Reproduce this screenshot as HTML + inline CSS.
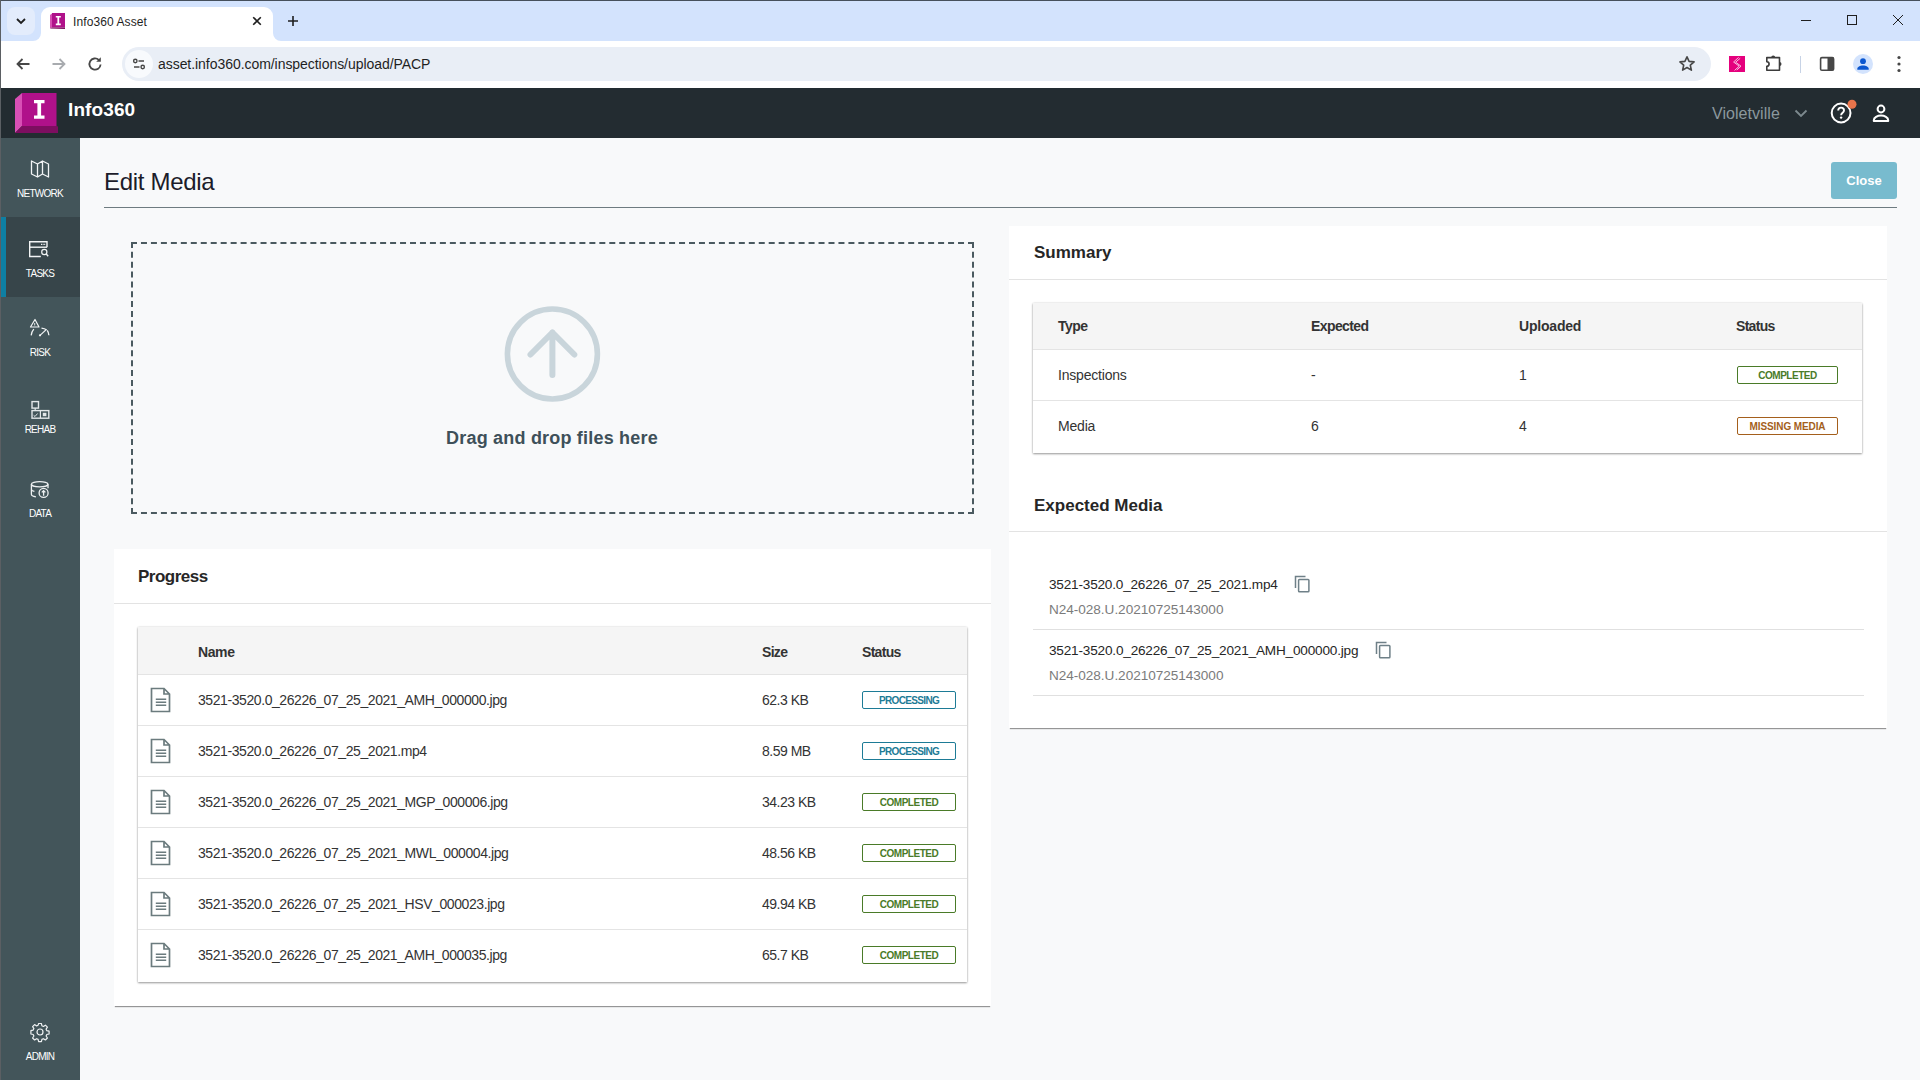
<!DOCTYPE html>
<html><head><meta charset="utf-8">
<style>
*{box-sizing:border-box;margin:0;padding:0}
html,body{width:1920px;height:1080px;overflow:hidden;background:#f8f9fa;font-family:"Liberation Sans",sans-serif;color:#262626}
.a{position:absolute}
svg{display:block}
/* browser chrome */
#tabstrip{left:0;top:0;width:1920px;height:41px;background:#d3e3fd}
#frametop{left:0;top:0;width:1920px;height:1px;background:#46505c}
#frameleft{left:0;top:0;width:1px;height:1080px;background:#5b5f63;z-index:50}
#toolbar{left:0;top:41px;width:1920px;height:47px;background:#fff}
#tab{left:41px;top:7px;width:232px;height:34px;background:#fff;border-radius:9px 9px 0 0}
#omni{left:122px;top:47px;width:1589px;height:34px;background:#e9eef6;border-radius:17px}
/* app header */
#hdr{left:0;top:88px;width:1920px;height:50px;background:#232c31}
#side{left:0;top:138px;width:80px;height:942px;background:#43555a}
.nav{position:absolute;left:0;width:80px;height:80px;color:#fff;font-size:9.5px;text-align:center}
.nav .lbl{position:absolute;left:0;width:80px;text-align:center}
#main{left:80px;top:138px;width:1840px;height:942px;background:#f8f9fa}
.sl{left:0;width:80px;text-align:center;color:#fff;font-size:10px;letter-spacing:-0.75px;white-space:nowrap}
.card{position:absolute;background:#fff}
.ttl{position:absolute;font-weight:bold;color:#262626}
.hline{position:absolute;height:1px;background:#e3e3e3}
.tbl{position:absolute;background:#fff;box-shadow:0 1px 2px rgba(0,0,0,.38),0 0 2px rgba(0,0,0,.12)}
.th{position:absolute;left:0;right:0;top:0;background:#f5f5f5;border-bottom:1px solid #e4e4e4}
.row{position:absolute;left:0;right:0;border-bottom:1px solid #e4e4e4}
.txt{position:absolute;white-space:nowrap;font-size:14px;color:#333}
.hd{position:absolute;white-space:nowrap;font-size:14px;font-weight:bold;color:#333}
.badge{position:absolute;height:18px;border:1.5px solid;border-radius:2px;font-size:10px;font-weight:bold;text-align:center;line-height:17px;white-space:nowrap}
.proc{color:#1d7b96;border-color:#1d7b96}
.comp{color:#4a7b28;border-color:#4a7b28}
.miss{color:#a45f1c;border-color:#a45f1c}
</style></head><body>
<div class="a" id="tabstrip"></div>
<div class="a" id="frametop"></div>
<div class="a" id="frameleft"></div>
<div class="a" id="toolbar"></div>
<div class="a" id="tab"></div>
<div class="a" id="omni"></div>


<!-- chrome details -->
<div class="a" style="left:7px;top:7px;width:28px;height:28px;border-radius:8px;background:#e3ecfc"></div>
<svg class="a" style="left:13px;top:13px" width="16" height="16" viewBox="0 0 16 16"><path d="M4 6l4 4 4-4" fill="none" stroke="#1f1f1f" stroke-width="1.8"/></svg>
<svg class="a" style="left:33px;top:33px" width="8" height="8" viewBox="0 0 8 8"><path d="M0 8A8 8 0 0 0 8 0V8z" fill="#fff"/></svg>
<svg class="a" style="left:273px;top:33px" width="8" height="8" viewBox="0 0 8 8"><path d="M8 8A8 8 0 0 1 0 0V8z" fill="#fff"/></svg>
<svg class="a" style="left:49px;top:12px" width="18" height="18" viewBox="0 0 18 18">
  <polygon points="1,3 3,1.5 3,15.5 1,16.5" fill="#d64fb3"/>
  <rect x="3" y="1" width="13" height="14.5" fill="#b0118a"/>
  <polygon points="1,16.5 3,15.5 16,15.5 16,17" fill="#7a0d5c"/>
  <path d="M6.8 4h5v1.6h-1.6v6h1.6v1.6h-5v-1.6h1.6v-6h-1.6z" fill="#fff"/>
</svg>
<div class="a" style="left:73px;top:15px;font-size:12px;color:#1f1f1f;white-space:nowrap;letter-spacing:0.1px">Info360 Asset</div>
<svg class="a" style="left:249px;top:13px" width="16" height="16" viewBox="0 0 16 16"><path d="M4.2 4.2l7.6 7.6M11.8 4.2l-7.6 7.6" stroke="#1f1f1f" stroke-width="1.6"/></svg>
<svg class="a" style="left:285px;top:13px" width="16" height="16" viewBox="0 0 16 16"><path d="M8 3v10M3 8h10" stroke="#1f1f1f" stroke-width="1.6"/></svg>
<!-- window controls -->
<svg class="a" style="left:1796px;top:10px" width="20" height="20" viewBox="0 0 20 20"><path d="M5 10.5h10" stroke="#1f1f1f" stroke-width="1"/></svg>
<svg class="a" style="left:1842px;top:10px" width="20" height="20" viewBox="0 0 20 20"><rect x="5.5" y="5.5" width="9" height="9" fill="none" stroke="#1f1f1f" stroke-width="1"/></svg>
<svg class="a" style="left:1888px;top:10px" width="20" height="20" viewBox="0 0 20 20"><path d="M5 5l10 10M15 5L5 15" stroke="#1f1f1f" stroke-width="1"/></svg>
<!-- nav -->
<svg class="a" style="left:13px;top:54px" width="20" height="20" viewBox="0 0 20 20"><path d="M16.5 10H4.5M9.5 5l-5 5 5 5" fill="none" stroke="#474747" stroke-width="1.8"/></svg>
<svg class="a" style="left:49px;top:54px" width="20" height="20" viewBox="0 0 20 20"><path d="M3.5 10h12M10.5 5l5 5-5 5" fill="none" stroke="#a8abaf" stroke-width="1.8"/></svg>
<svg class="a" style="left:85px;top:54px" width="20" height="20" viewBox="0 0 20 20"><path d="M15.6 10.5a5.6 5.6 0 1 1-1.8-4.6" fill="none" stroke="#474747" stroke-width="1.8"/><path d="M15.8 3.2v4.6h-4.6z" fill="#474747"/></svg>
<div class="a" style="left:125px;top:50px;width:28px;height:28px;border-radius:14px;background:#f8fafd"></div>
<svg class="a" style="left:131px;top:56px" width="16" height="16" viewBox="0 0 16 16">
  <circle cx="4.3" cy="5" r="1.7" fill="none" stroke="#474747" stroke-width="1.4"/>
  <path d="M7.5 5h5.5M3 11h5.5" stroke="#474747" stroke-width="1.6"/>
  <circle cx="11.7" cy="11" r="1.7" fill="none" stroke="#474747" stroke-width="1.4"/>
</svg>
<div class="a" style="left:158px;top:56px;font-size:14px;color:#1f1f1f;white-space:nowrap;letter-spacing:-0.05px">asset.info360.com/inspections/upload/PACP</div>
<svg class="a" style="left:1677px;top:54px" width="20" height="20" viewBox="0 0 20 20"><path d="M10 2.8l2.1 4.6 5 .5-3.8 3.3 1.1 4.9L10 13.5l-4.4 2.6 1.1-4.9-3.8-3.3 5-.5z" fill="none" stroke="#474747" stroke-width="1.6" stroke-linejoin="round"/></svg>
<div class="a" style="left:1729px;top:56px;width:16px;height:16px;background:#e5007d"></div>
<svg class="a" style="left:1729px;top:56px" width="16" height="16" viewBox="0 0 16 16"><path d="M9.6 1.4L4.6 6l5.6 4.2-4.6 4.2" fill="none" stroke="#fbd3ec" stroke-width="0.9"/><path d="M11.2 2.3L6.6 6.2l5.4 4-4.2 3.8" fill="none" stroke="#fbd3ec" stroke-width="0.9"/></svg>
<svg class="a" style="left:1764px;top:54px" width="20" height="20" viewBox="0 0 20 20"><path d="M2.8 3.6H15.5V16.3H2.8V12.3A2.3 2.3 0 0 0 2.8 7.7Z" fill="none" stroke="#3c3c3c" stroke-width="1.6" stroke-linejoin="round"/><path d="M7.2 3.6a2 2 0 0 1 4 0z" fill="#3c3c3c"/><path d="M15.5 8a2 2 0 0 1 0 4z" fill="#3c3c3c"/></svg>
<div class="a" style="left:1800px;top:56px;width:1px;height:17px;background:#c7d3e6"></div>
<svg class="a" style="left:1817px;top:54px" width="20" height="20" viewBox="0 0 20 20"><rect x="3.6" y="3.6" width="13" height="12.6" rx="1.3" fill="none" stroke="#474747" stroke-width="1.6"/><rect x="10.5" y="3.6" width="6.1" height="12.6" fill="#474747"/></svg>
<div class="a" style="left:1853px;top:54px;width:20px;height:20px;border-radius:10px;background:#d3e3fd"></div>
<svg class="a" style="left:1853px;top:54px" width="20" height="20" viewBox="0 0 20 20"><circle cx="10" cy="7.2" r="2.9" fill="#0b57d0"/><path d="M4.3 15.8v-1c0-1.8 2.6-3.2 5.7-3.2s5.7 1.4 5.7 3.2v1z" fill="#0b57d0"/></svg>
<svg class="a" style="left:1889px;top:54px" width="20" height="20" viewBox="0 0 20 20"><circle cx="10" cy="3.5" r="1.6" fill="#474747"/><circle cx="10" cy="10" r="1.6" fill="#474747"/><circle cx="10" cy="16.5" r="1.6" fill="#474747"/></svg>

<div class="a" id="hdr"></div>
<div class="a" id="side"></div>
<div class="a" id="main"></div>

<!-- header content -->
<svg class="a" style="left:12px;top:90px" width="50" height="46" viewBox="0 0 50 46">
  <rect x="10" y="3" width="34.5" height="33" fill="#b0118a"/>
  <polygon points="3,9 10,3 10,36 3,43" fill="#d84fb5"/>
  <polygon points="3,43 10,36 44.5,36 46,36.5 46,43" fill="#7d0e60"/>
  <path d="M22 10h10.5v3.2h-3.4v12.4h3.4v3.2H22v-3.2h3.4V13.2H22z" fill="#fff"/>
</svg>
<div class="a" style="left:68px;top:99px;font-size:19px;font-weight:bold;color:#fff;white-space:nowrap;letter-spacing:0.1px">Info360</div>
<div class="a" style="left:1712px;top:105px;font-size:16px;color:#8b989d;white-space:nowrap;letter-spacing:0.05px">Violetville</div>
<svg class="a" style="left:1793px;top:107px" width="16" height="12" viewBox="0 0 16 12"><path d="M2.5 3.5l5.5 5.5 5.5-5.5" fill="none" stroke="#7d8a8f" stroke-width="1.8"/></svg>
<svg class="a" style="left:1828px;top:98px" width="30" height="28" viewBox="0 0 30 28">
  <circle cx="13.1" cy="15" r="9.4" fill="none" stroke="#fff" stroke-width="2"/>
  <path d="M10.2 12.6c0-1.8 1.3-3 2.9-3s2.9 1.1 2.9 2.8c0 2.3-2.9 2.3-2.9 4.8" fill="none" stroke="#fff" stroke-width="1.9"/>
  <circle cx="13.1" cy="19.6" r="1.2" fill="#fff"/>
  <circle cx="24" cy="6.2" r="4.5" fill="#e8744b"/>
</svg>
<svg class="a" style="left:1870px;top:102px" width="22" height="22" viewBox="0 0 22 22">
  <circle cx="11" cy="7" r="3.4" fill="none" stroke="#fff" stroke-width="2"/>
  <path d="M3.8 19v-0.8c0-2.6 3.6-4.6 7.2-4.6s7.2 2 7.2 4.6v0.8z" fill="none" stroke="#fff" stroke-width="2" stroke-linejoin="round"/>
</svg>

<!-- sidebar -->
<div class="a" style="left:0;top:217px;width:80px;height:80px;background:#37454a"></div>
<div class="a" style="left:1px;top:217px;width:5px;height:80px;background:#0e7fa3"></div>
<svg class="a" style="left:29px;top:159px" width="22" height="22" viewBox="0 0 22 22">
  <path d="M2.5 2l6 3 5-3 6 3v13l-6-3-5 3-6-3z M8.5 5v13 M13.5 2v13" fill="none" stroke="#f2f4f5" stroke-width="1.3" stroke-linejoin="round"/>
</svg>
<div class="a sl" style="top:188px">NETWORK</div>
<svg class="a" style="left:27px;top:239px" width="24" height="22" viewBox="0 0 24 22">
  <path d="M13.8 17.5H2.7V2.7h17.3v5.5" fill="none" stroke="#f2f4f5" stroke-width="1.4"/>
  <path d="M2.7 8.2h17.3" fill="none" stroke="#f2f4f5" stroke-width="1.4"/>
  <path d="M14 5.3h4.5" stroke="#f2f4f5" stroke-width="1.3" stroke-dasharray="1 0.6"/>
  <circle cx="17.3" cy="13" r="2.6" fill="none" stroke="#f2f4f5" stroke-width="1.2"/>
  <path d="M19.2 15l2 2.2" stroke="#f2f4f5" stroke-width="1.4"/>
</svg>
<div class="a sl" style="top:268px">TASKS</div>
<svg class="a" style="left:28px;top:317px" width="24" height="22" viewBox="0 0 24 22">
  <path d="M7 2.5L2.5 10h8.5z" fill="none" stroke="#f2f4f5" stroke-width="1.2" stroke-linejoin="round"/>
  <path d="M6.7 6v2.5" stroke="#f2f4f5" stroke-width="0.9"/>
  <path d="M3.2 18.3c0.3-2.3 1-4.4 2.6-6.2" fill="none" stroke="#f2f4f5" stroke-width="1.3"/>
  <path d="M13.5 11.2c2 0.2 3.8 0.8 5.3 1.8" fill="none" stroke="#f2f4f5" stroke-width="1.3"/>
  <path d="M19.3 13.3c0.9 1.4 1.4 3.1 1.6 5" fill="none" stroke="#f2f4f5" stroke-width="1.3"/>
  <path d="M12 18.3l5.8-5.3" stroke="#f2f4f5" stroke-width="1.1"/>
  <circle cx="12" cy="18.3" r="1.1" fill="#f2f4f5"/>
</svg>
<div class="a sl" style="top:347px">RISK</div>
<svg class="a" style="left:28px;top:398px" width="24" height="24" viewBox="0 0 24 24">
  <rect x="4" y="3.6" width="6.5" height="6.5" fill="none" stroke="#e2e6e8" stroke-width="1.4"/>
  <rect x="4" y="12.6" width="16.8" height="7.6" fill="none" stroke="#e2e6e8" stroke-width="1.4"/>
  <path d="M12.4 12.6v7.6 M7.2 10.1v2.5" stroke="#e2e6e8" stroke-width="1.2"/>
  <path d="M5.6 17.3l1.4 1.2 2.6-3" fill="none" stroke="#e2e6e8" stroke-width="1"/>
  <rect x="14.8" y="14.8" width="3.6" height="3.4" fill="#e2e6e8"/>
</svg>
<div class="a sl" style="top:424px">REHAB</div>
<svg class="a" style="left:28px;top:478px" width="24" height="24" viewBox="0 0 24 24">
  <ellipse cx="11.7" cy="6.3" rx="8.3" ry="2.6" fill="none" stroke="#eef1f2" stroke-width="1.3"/>
  <path d="M3.4 6.3v10c0 1.3 2 2.2 4.5 2.5 M3.4 11.2c0 1 1.2 1.8 3 2.2 M20 6.3v4" fill="none" stroke="#eef1f2" stroke-width="1.3"/>
  <circle cx="15.6" cy="14.9" r="4.5" fill="none" stroke="#eef1f2" stroke-width="1.3"/>
  <path d="M15.6 17.8v-5.2 M13.8 14.4l1.8-1.8 1.8 1.8" fill="none" stroke="#eef1f2" stroke-width="1.3"/>
</svg>
<div class="a sl" style="top:508px">DATA</div>
<svg class="a" style="left:29px;top:1021px" width="22" height="22" viewBox="0 0 22 22">
  <path d="M9.6 2.5h2.8l0.5 2.3 1.5 0.7 2-1.3 2 2-1.3 2 0.7 1.5 2.3 0.5v2.8l-2.3 0.5-0.7 1.5 1.3 2-2 2-2-1.3-1.5 0.7-0.5 2.3H9.6l-0.5-2.3-1.5-0.7-2 1.3-2-2 1.3-2-0.7-1.5-2.3-0.5V9.6l2.3-0.5 0.7-1.5-1.3-2 2-2 2 1.3 1.5-0.7z" fill="none" stroke="#eef1f2" stroke-width="1.2" stroke-linejoin="round"/>
  <circle cx="11" cy="11" r="3" fill="none" stroke="#eef1f2" stroke-width="1.2"/>
</svg>
<div class="a sl" style="top:1051px">ADMIN</div>


<!-- page title -->
<div class="a" style="left:104px;top:168px;font-size:24px;color:#1c1c2a;letter-spacing:-0.3px;white-space:nowrap">Edit Media</div>
<div class="a" style="left:104px;top:207px;width:1793px;height:1px;background:#6e7b80"></div>
<div class="a" style="left:1831px;top:162px;width:66px;height:37px;background:#78bbce;border-radius:3px;color:#fff;font-weight:bold;font-size:13px;text-align:center;line-height:37px">Close</div>

<!-- dropzone -->
<div class="a" style="left:131px;top:242px;width:843px;height:272px;border:2px dashed #4b5a60"></div>

<!-- progress card -->
<div class="card" style="left:114px;top:549px;width:877px;height:457px;box-shadow:0 2px 1px -1px rgba(0,0,0,.4)"></div>

<!-- summary card -->
<div class="card" style="left:1009px;top:226px;width:878px;height:502px;box-shadow:0 2px 1px -1px rgba(0,0,0,.4)"></div>


<!-- dropzone content -->
<svg class="a" style="left:502px;top:304px" width="100" height="100" viewBox="0 0 100 100">
  <circle cx="50.4" cy="50" r="45" fill="none" stroke="#c9d5db" stroke-width="5.6"/>
  <path d="M50.4 71V28.5 M28.5 50.5l21.9-22 21.9 22" fill="none" stroke="#c9d5db" stroke-width="6" stroke-linecap="round" stroke-linejoin="round"/>
</svg>
<div class="a" style="left:0;top:428px;width:1104px;text-align:center;font-size:18px;font-weight:bold;color:#3e5059;letter-spacing:0.2px;white-space:nowrap">Drag and drop files here</div>

<!-- progress content -->
<div class="ttl" style="left:138px;top:567px;font-size:17px;letter-spacing:-0.5px">Progress</div>
<div class="hline" style="left:114px;top:603px;width:877px"></div>
<div class="tbl" style="left:138px;top:627px;width:829px;height:355px">
  <div class="th" style="height:48px"></div>
  <div class="hd" style="left:60px;top:17px;letter-spacing:-0.4px">Name</div>
  <div class="hd" style="left:624px;top:17px;letter-spacing:-0.7px">Size</div>
  <div class="hd" style="left:724px;top:17px;letter-spacing:-0.7px">Status</div>
  <div class="row" style="top:47px;height:52px"></div>
  <svg class="a" style="left:12px;top:60px" width="22" height="26" viewBox="0 0 22 26"><path d="M1.5 1.5h12.5l5.5 5.5v17.5H1.5z M14 1.5v5.5h5.5" fill="none" stroke="#6b7b7e" stroke-width="1.7" stroke-linejoin="miter"/><path d="M5.8 12.2h10.4M5.8 15.2h10.4M5.8 18.3h10.4" stroke="#6b7b7e" stroke-width="1.5"/></svg>
  <div class="txt" style="left:60px;top:65px;letter-spacing:-0.42px">3521-3520.0_26226_07_25_2021_AMH_000000.jpg</div>
  <div class="txt" style="left:624px;top:65px;letter-spacing:-0.5px">62.3 KB</div>
  <div class="badge proc" style="left:724px;top:64px;width:94px;letter-spacing:-0.65px">PROCESSING</div>
  <div class="row" style="top:98px;height:52px"></div>
  <svg class="a" style="left:12px;top:111px" width="22" height="26" viewBox="0 0 22 26"><path d="M1.5 1.5h12.5l5.5 5.5v17.5H1.5z M14 1.5v5.5h5.5" fill="none" stroke="#6b7b7e" stroke-width="1.7" stroke-linejoin="miter"/><path d="M5.8 12.2h10.4M5.8 15.2h10.4M5.8 18.3h10.4" stroke="#6b7b7e" stroke-width="1.5"/></svg>
  <div class="txt" style="left:60px;top:116px;letter-spacing:-0.42px">3521-3520.0_26226_07_25_2021.mp4</div>
  <div class="txt" style="left:624px;top:116px;letter-spacing:-0.5px">8.59 MB</div>
  <div class="badge proc" style="left:724px;top:115px;width:94px;letter-spacing:-0.65px">PROCESSING</div>
  <div class="row" style="top:149px;height:52px"></div>
  <svg class="a" style="left:12px;top:162px" width="22" height="26" viewBox="0 0 22 26"><path d="M1.5 1.5h12.5l5.5 5.5v17.5H1.5z M14 1.5v5.5h5.5" fill="none" stroke="#6b7b7e" stroke-width="1.7" stroke-linejoin="miter"/><path d="M5.8 12.2h10.4M5.8 15.2h10.4M5.8 18.3h10.4" stroke="#6b7b7e" stroke-width="1.5"/></svg>
  <div class="txt" style="left:60px;top:167px;letter-spacing:-0.42px">3521-3520.0_26226_07_25_2021_MGP_000006.jpg</div>
  <div class="txt" style="left:624px;top:167px;letter-spacing:-0.5px">34.23 KB</div>
  <div class="badge comp" style="left:724px;top:166px;width:94px;letter-spacing:-0.5px">COMPLETED</div>
  <div class="row" style="top:200px;height:52px"></div>
  <svg class="a" style="left:12px;top:213px" width="22" height="26" viewBox="0 0 22 26"><path d="M1.5 1.5h12.5l5.5 5.5v17.5H1.5z M14 1.5v5.5h5.5" fill="none" stroke="#6b7b7e" stroke-width="1.7" stroke-linejoin="miter"/><path d="M5.8 12.2h10.4M5.8 15.2h10.4M5.8 18.3h10.4" stroke="#6b7b7e" stroke-width="1.5"/></svg>
  <div class="txt" style="left:60px;top:218px;letter-spacing:-0.42px">3521-3520.0_26226_07_25_2021_MWL_000004.jpg</div>
  <div class="txt" style="left:624px;top:218px;letter-spacing:-0.5px">48.56 KB</div>
  <div class="badge comp" style="left:724px;top:217px;width:94px;letter-spacing:-0.5px">COMPLETED</div>
  <div class="row" style="top:251px;height:52px"></div>
  <svg class="a" style="left:12px;top:264px" width="22" height="26" viewBox="0 0 22 26"><path d="M1.5 1.5h12.5l5.5 5.5v17.5H1.5z M14 1.5v5.5h5.5" fill="none" stroke="#6b7b7e" stroke-width="1.7" stroke-linejoin="miter"/><path d="M5.8 12.2h10.4M5.8 15.2h10.4M5.8 18.3h10.4" stroke="#6b7b7e" stroke-width="1.5"/></svg>
  <div class="txt" style="left:60px;top:269px;letter-spacing:-0.42px">3521-3520.0_26226_07_25_2021_HSV_000023.jpg</div>
  <div class="txt" style="left:624px;top:269px;letter-spacing:-0.5px">49.94 KB</div>
  <div class="badge comp" style="left:724px;top:268px;width:94px;letter-spacing:-0.5px">COMPLETED</div>
  <div class="row" style="top:302px;height:51px;border-bottom:none"></div>
  <svg class="a" style="left:12px;top:315px" width="22" height="26" viewBox="0 0 22 26"><path d="M1.5 1.5h12.5l5.5 5.5v17.5H1.5z M14 1.5v5.5h5.5" fill="none" stroke="#6b7b7e" stroke-width="1.7" stroke-linejoin="miter"/><path d="M5.8 12.2h10.4M5.8 15.2h10.4M5.8 18.3h10.4" stroke="#6b7b7e" stroke-width="1.5"/></svg>
  <div class="txt" style="left:60px;top:320px;letter-spacing:-0.42px">3521-3520.0_26226_07_25_2021_AMH_000035.jpg</div>
  <div class="txt" style="left:624px;top:320px;letter-spacing:-0.5px">65.7 KB</div>
  <div class="badge comp" style="left:724px;top:319px;width:94px;letter-spacing:-0.5px">COMPLETED</div>
</div>

<!-- summary content -->
<div class="ttl" style="left:1034px;top:243px;font-size:17px">Summary</div>
<div class="hline" style="left:1009px;top:279px;width:878px"></div>
<div class="tbl" style="left:1033px;top:303px;width:829px;height:150px">
  <div class="th" style="height:47px"></div>
  <div class="hd" style="left:25px;top:15px;letter-spacing:-0.5px">Type</div>
  <div class="hd" style="left:278px;top:15px;letter-spacing:-0.6px">Expected</div>
  <div class="hd" style="left:486px;top:15px;letter-spacing:-0.2px">Uploaded</div>
  <div class="hd" style="left:703px;top:15px;letter-spacing:-0.7px">Status</div>
  <div class="row" style="top:46px;height:52px"></div>
  <div class="txt" style="left:25px;top:64px;letter-spacing:-0.2px">Inspections</div>
  <div class="txt" style="left:278px;top:64px">-</div>
  <div class="txt" style="left:486px;top:64px">1</div>
  <div class="badge comp" style="left:704px;top:63px;width:101px;letter-spacing:-0.5px">COMPLETED</div>
  <div class="txt" style="left:25px;top:115px;letter-spacing:-0.2px">Media</div>
  <div class="txt" style="left:278px;top:115px">6</div>
  <div class="txt" style="left:486px;top:115px">4</div>
  <div class="badge miss" style="left:704px;top:114px;width:101px;letter-spacing:-0.1px">MISSING MEDIA</div>
</div>

<div class="ttl" style="left:1034px;top:496px;font-size:17px">Expected Media</div>
<div class="hline" style="left:1009px;top:531px;width:878px"></div>
<div class="txt" style="left:1049px;top:577px;font-size:13.6px;letter-spacing:-0.2px;color:#262626">3521-3520.0_26226_07_25_2021.mp4</div>
<div class="txt" style="left:1049px;top:602px;font-size:13.6px;letter-spacing:-0.04px;color:#7b7b7b">N24-028.U.20210725143000</div>
<div class="hline" style="left:1033px;top:629px;width:831px;background:#e0e0e0"></div>
<div class="txt" style="left:1049px;top:643px;font-size:13.6px;letter-spacing:-0.19px;color:#262626">3521-3520.0_26226_07_25_2021_AMH_000000.jpg</div>
<div class="txt" style="left:1049px;top:668px;font-size:13.6px;letter-spacing:-0.04px;color:#7b7b7b">N24-028.U.20210725143000</div>
<div class="hline" style="left:1033px;top:695px;width:831px;background:#e0e0e0"></div>
<svg class="a" style="left:1293px;top:574px" width="20" height="20" viewBox="0 0 20 20"><path d="M2.5 14V2.5h10" fill="none" stroke="#6f8088" stroke-width="1.5"/><rect x="5.6" y="5.4" width="10.3" height="12.4" rx="0.8" fill="none" stroke="#6f8088" stroke-width="1.5"/></svg>
<svg class="a" style="left:1374px;top:640px" width="20" height="20" viewBox="0 0 20 20"><path d="M2.5 14V2.5h10" fill="none" stroke="#6f8088" stroke-width="1.5"/><rect x="5.6" y="5.4" width="10.3" height="12.4" rx="0.8" fill="none" stroke="#6f8088" stroke-width="1.5"/></svg>
</body></html>
